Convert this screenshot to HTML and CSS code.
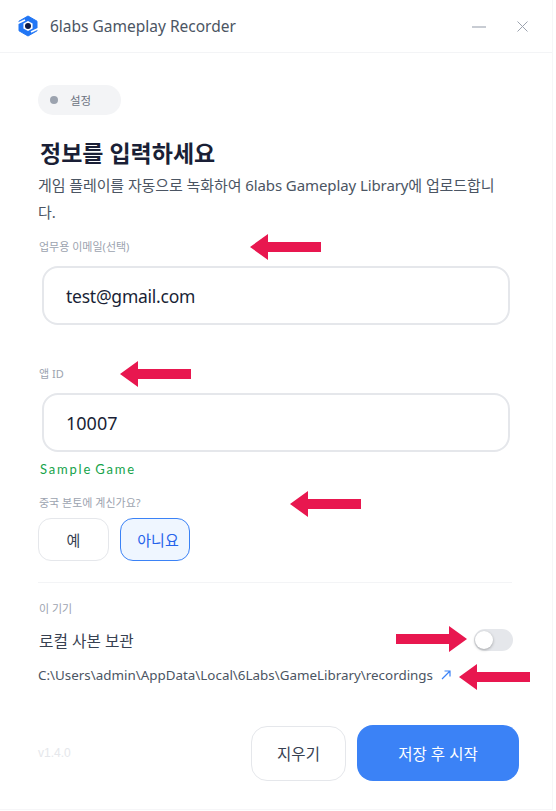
FILE: index.html
```html
<!DOCTYPE html>
<html lang="ko">
<head>
<meta charset="utf-8">
<title>6labs Gameplay Recorder</title>
<link rel="stylesheet" href="styles.css">
</head>
<body>
<div class="window">
  <header class="titlebar">
    <svg class="logo" width="22" height="22" viewBox="0 0 22 22">
      <path d="M11 1 20 6.200v9.600L11 21 2 15.800V6.200z" fill="#2176f5" stroke="#2176f5" stroke-width="1" stroke-linejoin="round"/>
      <path d="M11 6 15.600 8.600V13.400L11 16 6.400 13.400V8.600z" fill="#fff"/>
      <path d="M.5 8.500 8 5M21.500 13.500 14 17" stroke="#fff" stroke-width="1.800" fill="none"/>
      <circle cx="11" cy="11" r="3" fill="#0d1a45"/>
    </svg>
    <span class="app-name">6labs Gameplay Recorder</span>
    <div class="window-controls">
      <svg width="14" height="14" viewBox="0 0 14 14"><path d="M0 8h14" stroke="#9ca3af" stroke-width="1.100" fill="none"/></svg>
      <svg width="11" height="11" viewBox="0 0 11 11"><path d="M.5.5l10 10M10.500.5l-10 10" stroke="#9ca3af" stroke-width="1" fill="none"/></svg>
    </div>
  </header>

  <main class="content">
    <div class="pill"><span class="pill-dot"></span>설정</div>
    <h1 class="heading">정보를 입력하세요</h1>
    <p class="desc">게임 플레이를 자동으로 녹화하여 6labs Gameplay Library에 업로드합니다.</p>

    <label class="label label-email">업무용 이메일(선택)</label>
    <div class="input input-email">test@gmail.com</div>

    <label class="label label-app">앱 ID</label>
    <div class="input">10007</div>
    <div class="game-name">Sample Game</div>

    <label class="label label-china">중국 본토에 계신가요?</label>
    <div class="choices">
      <button class="choice">예</button>
      <button class="choice choice-active">아니요</button>
    </div>

    <hr class="divider">

    <div class="section-label">이 기기</div>
    <div class="toggle-row">
      <span class="toggle-text">로컬 사본 보관</span>
      <span class="toggle"><span class="knob"></span></span>
    </div>
    <div class="path-row">
      <span class="path">C:\Users\admin\AppData\Local\6Labs\GameLibrary\recordings</span>
      <svg class="open-link" width="10" height="10" viewBox="0 0 10 10"><path d="M1 9 8.500 1.500M3.500 1h5.500v5.500" stroke="#3b82f6" stroke-width="1.200" fill="none"/></svg>
    </div>

    <footer class="footer">
      <span class="version">v1.4.0</span>
      <button class="btn btn-clear">지우기</button>
      <button class="btn btn-primary">저장 후 시작</button>
    </footer>
  </main>

  <svg class="arrow arrow-1" width="71" height="26" viewBox="0 0 71 26"><path d="M0 13 18 0v8h53v10H18v8z"/></svg>
  <svg class="arrow arrow-2" width="71" height="26" viewBox="0 0 71 26"><path d="M0 13 18 0v8h53v10H18v8z"/></svg>
  <svg class="arrow arrow-3" width="71" height="26" viewBox="0 0 71 26"><path d="M0 13 18 0v8h53v10H18v8z"/></svg>
  <svg class="arrow arrow-4" width="71" height="26" viewBox="0 0 71 26"><path d="M71 13 53 0v8H0v10h53v8z"/></svg>
  <svg class="arrow arrow-5" width="71" height="26" viewBox="0 0 71 26"><path d="M0 13 18 0v8h53v10H18v8z"/></svg>
</div>
</body>
</html>
```
FILE: styles.css
```css
* { box-sizing: border-box; }
html, body { margin: 0; padding: 0; }
body {
  width: 556px;
  height: 811px;
  background: #fff;
  font-family: "Noto Sans", "Noto Sans CJK KR", sans-serif;
  overflow: hidden;
}
.window { position: relative; width: 553px; height: 810px; border-right: 1px solid #f6f6f8; border-bottom: 1px solid #f6f6f8; }
.titlebar {
  height: 53px;
  display: flex;
  align-items: center;
  padding: 0 24px 0 17px;
  border-bottom: 1px solid #f3f4f6;
}
.logo { flex: none; }
.app-name { margin-left: 11px; font-size: 15.5px; color: #4b5563; }
.window-controls { margin-left: auto; display: flex; align-items: center; gap: 31px; }
.content { padding: 32px 40px 0 38px; }
.pill {
  width: 83px;
  height: 30px;
  border-radius: 15px;
  background: #f3f4f6;
  display: flex;
  align-items: center;
  padding-left: 12px;
  font-size: 11.5px;
  color: #6b7280;
}
.pill-dot { width: 8px; height: 8px; border-radius: 50%; background: #9ca3af; margin-right: 12px; }
.heading { margin: 21px 0 0 2px; font-size: 23px; line-height: 34px; font-weight: 700; color: #1a1f36; }
.desc { margin: 2px 0 0; font-size: 15px; line-height: 27px; letter-spacing: -.09px; color: #4b5563; }
.label { display: block; margin-left: 1px; font-size: 11px; line-height: 16px; color: #9ca3af; }
.label-email { margin-top: 13px; }
.label-app { margin-top: 41px; }
.label-china { margin-top: 17px; }
.input {
  margin: 11px 2px 0 4px;
  height: 59px;
  border: 2px solid #e5e7eb;
  border-radius: 16px;
  padding-left: 22px;
  display: flex;
  align-items: center;
  font-size: 18px;
  color: #1a1f36;
}
.input-email { font-size: 17.5px; letter-spacing: -.25px; }
.game-name { margin: 9px 0 0 2px; font-family: "Lato", sans-serif; font-size: 13px; line-height: 17px; letter-spacing: 1.8px; word-spacing: -2px; color: #16a34a; }
.choices { display: flex; gap: 11px; margin-top: 7px; }
.choice {
  height: 43px;
  width: 71px;
  border: 1px solid #e5e7eb;
  border-radius: 13px;
  background: #fff;
  font: inherit;
  font-size: 15px;
  color: #374151;
}
.choice-active { width: 70px; padding-left: 6px; padding-right: 0; background: #eff6ff; border-color: #3b82f6; color: #2563eb; }
.divider { margin: 21px 0 0; border: 0; border-top: 1px solid #f3f4f6; }
.section-label { margin-top: 18px; margin-left: 1px; font-size: 11px; line-height: 16px; color: #9ca3af; }
.toggle-row { display: flex; align-items: center; justify-content: space-between; margin: 7px -1px 0 1px; height: 32px; }
.toggle-text { font-size: 15.7px; color: #374151; }
.toggle { position: relative; display: block; width: 39px; height: 22px; border-radius: 11px; background: #e5e7eb; }
.knob { position: absolute; left: 1px; top: 2px; width: 18px; height: 18px; border-radius: 50%; background: #fff; box-shadow: 0 1px 3px rgba(0,0,0,.3); }
.path-row { display: flex; align-items: center; margin-top: 8px; height: 22px; }
.path { font-size: 13.4px; color: #4b5563; }
.open-link { margin-left: 8px; flex: none; }
.footer { display: flex; align-items: center; margin-top: 39px; }
.version { font-family: "Liberation Sans", sans-serif; font-size: 12px; color: #e5e7eb; margin-right: auto; }
.btn { font: inherit; font-size: 15.5px; border-radius: 16px; }
.btn-clear { width: 95px; height: 55px; background: #fff; border: 1px solid #e5e7eb; color: #374151; }
.btn-primary { width: 162px; height: 56px; margin-left: 11px; margin-right: -7px; background: #3b82f6; border: 0; color: #fff; }
.arrow { position: absolute; fill: #e8174f; }
.arrow-1 { left: 250px; top: 234px; }
.arrow-2 { left: 120px; top: 361px; }
.arrow-3 { left: 290px; top: 491px; }
.arrow-4 { left: 396px; top: 626px; }
.arrow-5 { left: 459px; top: 664px; }
```
